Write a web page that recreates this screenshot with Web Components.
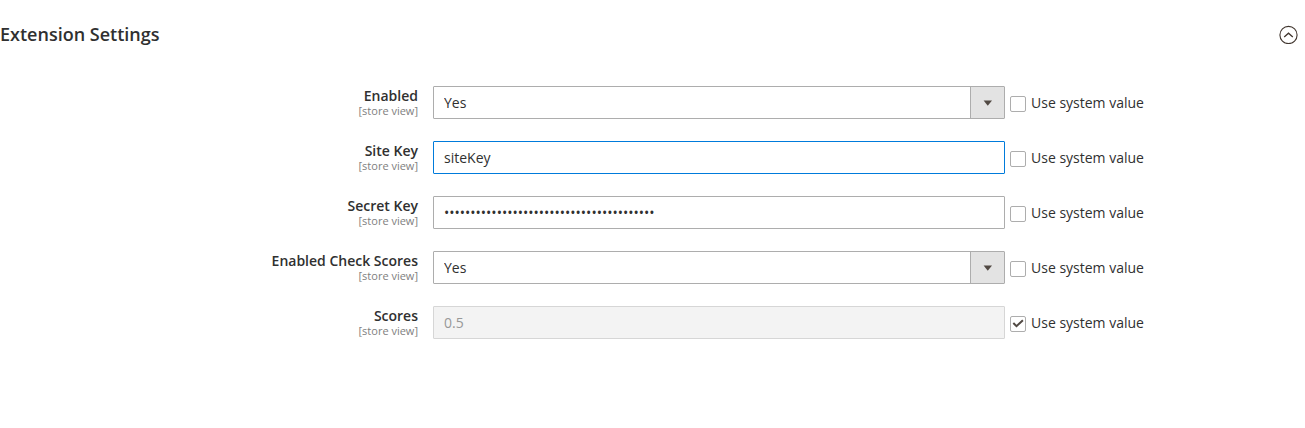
<!DOCTYPE html>
<html lang="en">
<head>
<meta charset="utf-8">
<meta name="viewport" content="width=device-width, initial-scale=1">
<title>Extension Settings</title>
<style>
  body { margin: 0; background: #fff; color: #303030; font: 14px/20px "Open Sans", "Noto Sans", sans-serif; }
</style>
</head>
<body>
<settings-section heading="Extension Settings">
  <settings-field label="Enabled" scope="[store view]" type="select" value="Yes"></settings-field>
  <settings-field label="Site Key" scope="[store view]" type="text" value="siteKey" active></settings-field>
  <settings-field label="Secret Key" scope="[store view]" type="password" value="0123456789012345678901234567890123456789"></settings-field>
  <settings-field label="Enabled Check Scores" scope="[store view]" type="select" value="Yes"></settings-field>
  <settings-field label="Scores" scope="[store view]" type="text" value="0.5" inherited></settings-field>
</settings-section>

<template id="section-template">
  <style>
    :host { display: block; }
    header { display: flex; align-items: center; justify-content: space-between; padding: 22px 7px 22px 0; }
    h2 { margin: 0; font-size: 18px; line-height: 24px; font-weight: 600; }
    button { display: block; margin: 0; padding: 0; border: 0; background: none; color: #41362f; cursor: pointer; }
    svg { display: block; width: 20px; height: 20px; }
    .fields { display: grid; gap: 22px; padding: 18px 0 88px; }
    .fields[hidden] { display: none; }
  </style>
  <header>
    <h2></h2>
    <button type="button" aria-expanded="true" aria-label="Toggle section">
      <svg viewBox="0 0 20 20" fill="none" stroke="currentColor" aria-hidden="true">
        <circle cx="10.5" cy="11" r="8.6" stroke-width="1.1"/>
        <path d="M6.2 12.9 10.5 9.2l4.3 3.7" stroke-width="1.3"/>
      </svg>
    </button>
  </header>
  <div class="fields"><slot></slot></div>
</template>

<template id="field-template">
  <style>
    :host { display: grid; grid-template-columns: minmax(0, 433fr) minmax(0, 572fr) minmax(0, 300fr); align-items: start; }
    * { box-sizing: border-box; }
    .title { display: block; padding-right: 15px; text-align: right; font-weight: 600; }
    .title span { display: block; }
    .title .scope { font-size: 11px; line-height: 10px; font-weight: 400; color: #808080; }
    .control { display: block; width: 100%; height: 33px; margin: 0; padding: 0 10px; border: 1px solid #adadad; border-radius: 1px;
      background: #fff; color: #303030; font: inherit; outline: 0; appearance: none; }
    select.control {
      padding-right: 44px;
      background: url("data:image/svg+xml,%3Csvg xmlns='http://www.w3.org/2000/svg' width='34' height='31'%3E%3Cpath fill='%23e3e3e3' d='M0 0h34v31H0z'/%3E%3Cpath fill='%23adadad' d='M0 0h1v31H0z'/%3E%3Cpath fill='%23514943' d='M13.6 13.6h8.4l-4.2 5.2z'/%3E%3C/svg%3E") right center no-repeat #fff;
    }
    .control.active, .control:focus { border-color: #007bdb; }
    .control:disabled { background: #f3f3f3; border-color: #d6d6d6; color: #989898; opacity: 1; }
    .inherit { display: flex; align-items: center; gap: 5px; height: 33px; padding-left: 5px; }
    .inherit input { flex: none; width: 16px; height: 16px; margin: 2px 0 0; border: 1px solid #adadad; border-radius: 2px; background: #fff; appearance: none; }
    .inherit input:checked {
      background: url("data:image/svg+xml,%3Csvg xmlns='http://www.w3.org/2000/svg' width='14' height='14'%3E%3Cpath fill='none' stroke='%23514943' stroke-width='2' d='M2.3 6l3.2 3.2 6.4-5.9'/%3E%3C/svg%3E") center no-repeat #fff;
    }
  </style>
  <label class="title" for="control"><span class="name"></span><span class="scope"></span></label>
  <div class="holder"></div>
  <div class="inherit"><input type="checkbox" id="inherit"><label for="inherit">Use system value</label></div>
</template>

<script>
  class SettingsSection extends HTMLElement {
    connectedCallback() {
      if (this.shadowRoot) return;
      const root = this.attachShadow({ mode: "open" });
      root.append(document.getElementById("section-template").content.cloneNode(true));
      root.querySelector("h2").textContent = this.getAttribute("heading");
      const button = root.querySelector("button");
      button.addEventListener("click", () => {
        const fields = root.querySelector(".fields");
        fields.hidden = !fields.hidden;
        button.setAttribute("aria-expanded", String(!fields.hidden));
      });
    }
  }

  class SettingsField extends HTMLElement {
    connectedCallback() {
      if (this.shadowRoot) return;
      const root = this.attachShadow({ mode: "open" });
      root.append(document.getElementById("field-template").content.cloneNode(true));
      root.querySelector(".name").textContent = this.getAttribute("label");
      root.querySelector(".scope").textContent = this.getAttribute("scope");
      const type = this.getAttribute("type");
      const control = document.createElement(type === "select" ? "select" : "input");
      if (type === "select") control.append(new Option("Yes"), new Option("No"));
      else control.type = type;
      control.id = "control";
      control.className = "control";
      control.value = this.getAttribute("value");
      control.classList.toggle("active", this.hasAttribute("active"));
      root.querySelector(".holder").append(control);
      const box = root.querySelector("#inherit");
      box.checked = control.disabled = this.hasAttribute("inherited");
      box.addEventListener("change", () => { control.disabled = box.checked; });
    }
  }

  customElements.define("settings-section", SettingsSection);
  customElements.define("settings-field", SettingsField);
</script>
</body>
</html>
